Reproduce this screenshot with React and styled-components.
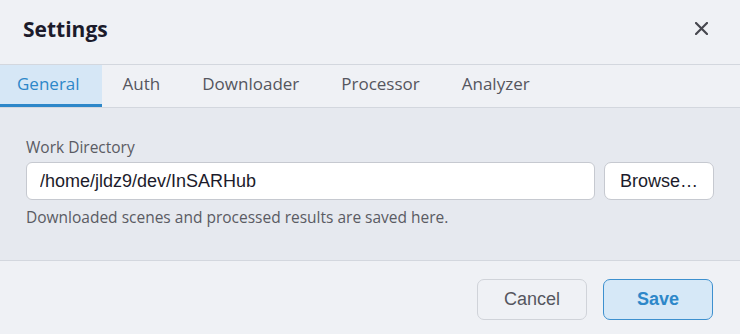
import React, { useState } from 'react'
import styled, { createGlobalStyle } from 'styled-components'

const GlobalStyle = createGlobalStyle`
    html, body {
        margin: 0;
        padding: 0;
        background: #eff1f5;
    }
    * {
        box-sizing: border-box;
    }
`

const Dialog = styled.div`
    width: 740px;
    height: 334px;
    display: flex;
    flex-direction: column;
    background: #eff1f5;
    font-family: "Open Sans", "Noto Sans", sans-serif;
    color: #4c4f58;
`

const Header = styled.header`
    height: 65px;
    display: flex;
    align-items: center;
    justify-content: space-between;
    padding: 0 29px 6px 23px;
    border-bottom: 1px solid #d3d7de;

    h2 {
        margin: 0;
        font-size: 21px;
        font-weight: 700;
        color: #1c1b2b;
    }
`

const CloseButton = styled.button`
    width: 20px;
    height: 20px;
    padding: 0;
    margin-bottom: 2px;
    border: none;
    background: transparent;
    display: flex;
    align-items: center;
    justify-content: center;
    cursor: pointer;
`

const Tabs = styled.nav`
    height: 43px;
    display: flex;
    border-bottom: 1px solid #d3d7de;
`

const Tab = styled.div`
    padding: 0 21px 2px 21px;
    display: flex;
    align-items: center;
    font-size: 17px;
    color: ${p => (p.$active ? '#2d87c9' : '#55565e')};
    background: ${p => (p.$active ? '#d6e7f6' : 'transparent')};
    border-bottom: 3px solid ${p => (p.$active ? '#2d87c9' : 'transparent')};
    cursor: pointer;
    user-select: none;

    &:first-child {
        padding-left: 17px;
        padding-right: 22px;
    }
`

const Body = styled.section`
    flex: 0 0 153px;
    background: #e6e9ef;
    border-bottom: 1px solid #d3d7de;
    padding: 28px 26px 0 26px;
`

const Label = styled.label`
    display: block;
    font-size: 15.5px;
    color: #5a5b63;
    margin-bottom: 4px;
`

const Row = styled.div`
    display: flex;
    gap: 9px;
`

const Input = styled.input`
    flex: 1;
    height: 38px;
    padding: 0 13px;
    border: 1px solid #c6c9d0;
    border-radius: 6px;
    background: #fff;
    font-family: "Liberation Sans", Arial, sans-serif;
    font-size: 18px;
    color: #1c1b2b;
    outline: none;
`

const Button = styled.button`
    width: 110px;
    height: ${p => (p.$tall ? '41px' : '38px')};
    border-radius: 7px;
    font-family: "Liberation Sans", Arial, sans-serif;
    font-size: 18px;
    cursor: pointer;
    border: 1px solid ${p => (p.$primary ? '#3d90cf' : p.$ghost ? '#d0d3d9' : '#c6c9d0')};
    background: ${p => (p.$primary ? '#d6e8f7' : p.$ghost ? '#eff1f5' : '#fff')};
    color: ${p => (p.$primary ? '#2d87c9' : p.$ghost ? '#55565e' : '#1c1b2b')};
    font-weight: ${p => (p.$primary ? 700 : 400)};
`

const Hint = styled.p`
    margin: 6px 0 0;
    font-size: 15.5px;
    color: #5a5b63;
`

const Footer = styled.footer`
    flex: 1;
    display: flex;
    justify-content: flex-end;
    align-items: flex-start;
    gap: 16px;
    padding: 18px 27px 0 0;
`

const tabs = ['General', 'Auth', 'Downloader', 'Processor', 'Analyzer']

const App = () => {
    const [active, setActive] = useState('General')
    return (
        <>
            <GlobalStyle />
            <Dialog>
                <Header>
                    <h2>Settings</h2>
                    <CloseButton aria-label="Close">
                        <svg width="13" height="13" viewBox="0 0 13 13">
                            <path d="M1 1 L12 12 M12 1 L1 12" stroke="#46474f" strokeWidth="2.2" strokeLinecap="round" />
                        </svg>
                    </CloseButton>
                </Header>
                <Tabs>
                    {tabs.map(t => (
                        <Tab key={t} $active={t === active} onClick={() => setActive(t)}>
                            {t}
                        </Tab>
                    ))}
                </Tabs>
                <Body>
                    <Label>Work Directory</Label>
                    <Row>
                        <Input defaultValue="/home/jldz9/dev/InSARHub" />
                        <Button>Browse…</Button>
                    </Row>
                    <Hint>Downloaded scenes and processed results are saved here.</Hint>
                </Body>
                <Footer>
                    <Button $ghost $tall>Cancel</Button>
                    <Button $primary $tall>Save</Button>
                </Footer>
            </Dialog>
        </>
    )
}

export default App
